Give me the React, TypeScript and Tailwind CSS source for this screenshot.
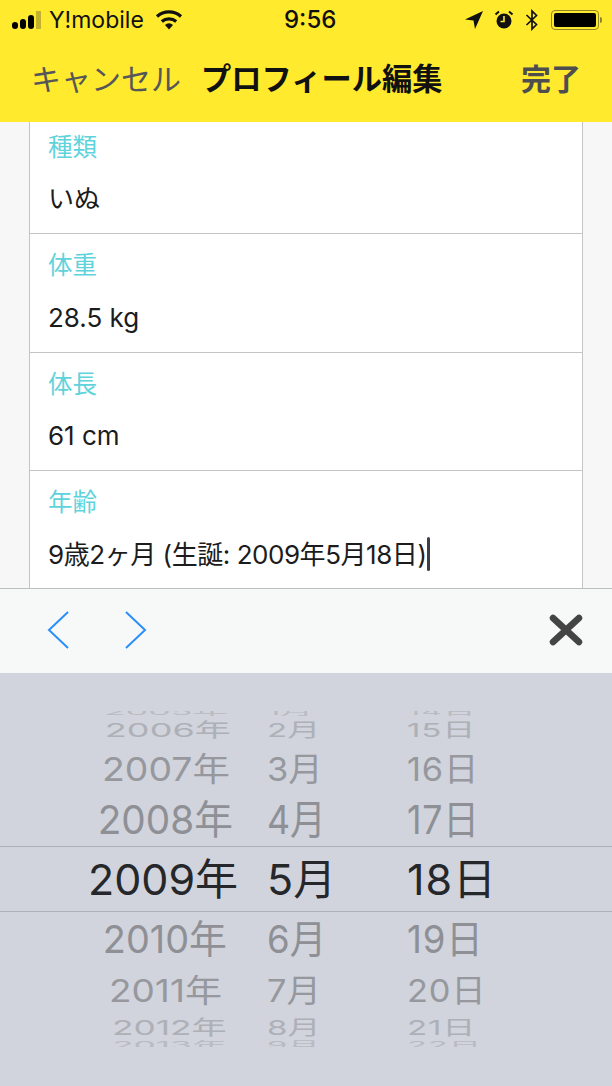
const sans = "font-['Inter','Noto_Sans_CJK_JP',sans-serif]";

function Field({ label, value, caret }: { label: string; value: string; caret?: boolean }) {
  return (
    <div className="h-[118.5px] shrink-0 border-b border-[#c4c4c4] pl-[18px] pt-[15px]">
      <div className="text-[24.5px] leading-[32px] text-[#5fd3dc]">{label}</div>
      <div className={`mt-[20px] flex h-[32px] items-center text-[26px] text-[#1c1c1c] ${caret ? "tracking-[-0.45px]" : ""}`}>
        {value}
        {caret && <span className="ml-px h-[34px] w-[3px] rounded-sm bg-[#3c4046]" />}
      </div>
    </div>
  );
}

type WheelRow = { year: string; month: string; day: string; row: string; text: string; yearX: string; restX: string };

const rows: WheelRow[] = [
  { year: "2005年", month: "1月", day: "14日", row: "h-[5px] items-end", text: "scale-y-[.2] text-[#b9bbc2]", yearX: "origin-[63%_100%] scale-x-[.83]", restX: "origin-bottom-left scale-x-[.76]" },
  { year: "2006年", month: "2月", day: "15日", row: "h-[29px] items-center", text: "scale-y-[.45] text-[#aeb0b7]", yearX: "origin-[70%_50%] scale-x-[.84]", restX: "origin-left scale-x-[.77]" },
  { year: "2007年", month: "3月", day: "16日", row: "h-[48px] items-center", text: "scale-y-[.76] text-[#96989e]", yearX: "origin-[63%_50%] scale-x-[.87]", restX: "origin-left scale-x-[.8]" },
  { year: "2008年", month: "4月", day: "17日", row: "h-[53px] items-center", text: "scale-y-[.93] text-[#8e9096]", yearX: "origin-[65%_50%] scale-x-[.9]", restX: "origin-left scale-x-[.83]" },
  { year: "2009年", month: "5月", day: "18日", row: "h-[66px] items-center border-y border-[#aeb0b8]", text: "text-[#26272a]", yearX: "", restX: "" },
  { year: "2010年", month: "6月", day: "19日", row: "h-[54px] items-center", text: "scale-y-[.9] text-[#8e9096]", yearX: "origin-[58%_50%] scale-x-[.88]", restX: "origin-left scale-x-[.85]" },
  { year: "2011年", month: "7月", day: "20日", row: "h-[48px] items-center", text: "scale-y-[.73] text-[#96989e]", yearX: "origin-[65%_50%] scale-x-[.86]", restX: "origin-left scale-x-[.8]" },
  { year: "2012年", month: "8月", day: "21日", row: "h-[26px] items-center", text: "scale-y-[.47] text-[#aeb0b7]", yearX: "origin-[75%_50%] scale-x-[.82]", restX: "origin-left scale-x-[.77]" },
  { year: "2013年", month: "9月", day: "22日", row: "h-[7px] items-start", text: "scale-y-[.25] text-[#b9bbc2]", yearX: "origin-[75%_0%] scale-x-[.82]", restX: "origin-top-left scale-x-[.76]" },
];

function StatusBar() {
  return (
    <div className="flex h-[40px] items-center pl-[12px] pr-[10px] text-[#111]">
      <div className="flex w-[272px] items-center">
        <div className="flex items-end gap-[2px]">
          <span className="h-[7px] w-[6px] rounded-full bg-black" />
          <span className="h-[10px] w-[6px] rounded-full bg-black" />
          <span className="h-[14px] w-[6px] rounded-sm bg-black" />
          <span className="h-[18px] w-[5px] bg-[#c2b12c]" />
        </div>
        <span className="ml-[8px] text-[23px] leading-none">Y!mobile</span>
        <svg className="ml-[11px]" width="28" height="20" viewBox="0 0 28 20">
          <path d="M14 19.5l-4-4.6a6 6 0 0 1 8 0z" fill="#111" />
          <path d="M6.8 11.500a11 11 0 0 1 14.400 0" stroke="#111" strokeWidth="3.2" fill="none" />
          <path d="M2 6.500a18 18 0 0 1 24 0" stroke="#111" strokeWidth="3.2" fill="none" />
        </svg>
      </div>
      <span className="text-[24px] font-medium leading-none">9:56</span>
      <div className="ml-auto flex items-center">
        <svg width="20" height="20" viewBox="0 0 20 20">
          <path d="M19 1L1 9.500l8.500 1 1.500 8.500z" fill="#111" />
        </svg>
        <svg className="ml-[10px]" width="20" height="20" viewBox="0 0 20 20">
          <circle cx="10" cy="11" r="7.500" fill="#111" />
          <path d="M10 6v5.500H6.500" stroke="#ffea2d" strokeWidth="1.6" fill="none" />
          <path d="M1.500 4.500L5 1.500M18.500 4.500L15 1.500" stroke="#111" strokeWidth="2" />
        </svg>
        <svg className="ml-[11px]" width="14" height="22" viewBox="0 0 14 22">
          <path d="M1.500 6l10 9.500L7 20V2l4.500 4.500-10 9.500" stroke="#111" strokeWidth="1.7" fill="none" />
        </svg>
        <div className="ml-[12px] flex h-[20px] w-[48px] items-center rounded-[4px] border border-[#8f8428] p-[2px]">
          <div className="h-full w-full rounded-[2px] bg-black" />
        </div>
        <span className="ml-px h-[6px] w-[2px] rounded-r-sm bg-[#8f8428]" />
      </div>
    </div>
  );
}

export default function App() {
  return (
    <div className={`flex h-[1086px] w-[612px] flex-col overflow-hidden bg-[#f7f7f7] ${sans}`}>
      <header className="z-10 h-[122px] shrink-0 bg-[#ffea2d]">
        <StatusBar />
        <div className="flex h-[80px] items-center pb-[2px] pl-[31px] pr-[31px]">
          <span className="w-[170px] text-[30px] leading-none text-[#56565a]">キャンセル</span>
          <h1 className="text-[30.250px] font-bold leading-none text-[#111]">プロフィール編集</h1>
          <span className="ml-auto text-[30px] font-semibold leading-none text-[#4e4e4e]">完了</span>
        </div>
      </header>

      <main className="h-[466px] shrink-0 overflow-hidden">
        <div className="-mt-[6.500px] mx-[29px] border-x border-[#c4c4c4] bg-white">
          <Field label="種類" value="いぬ" />
          <Field label="体重" value="28.5 kg" />
          <Field label="体長" value="61 cm" />
          <Field label="年齢" value="9歳2ヶ月 (生誕: 2009年5月18日)" caret />
        </div>
      </main>

      <div className="flex h-[85px] shrink-0 items-center border-t border-[#bdbdbd] bg-[#f7f8f8] pb-[3px] pl-[47px] pr-[29px]">
        <svg width="24" height="40" viewBox="0 0 24 40">
          <path d="M21 2L2 20l19 18" stroke="#2a8ffa" strokeWidth="2" fill="none" />
        </svg>
        <svg className="ml-[52px]" width="24" height="40" viewBox="0 0 24 40">
          <path d="M3 2l19 18L3 38" stroke="#2a8ffa" strokeWidth="2" fill="none" />
        </svg>
        <svg className="ml-auto" width="34" height="32" viewBox="0 0 34 32">
          <path d="M4 4l26 24M30 4L4 28" stroke="#444" strokeWidth="6.500" strokeLinecap="round" fill="none" />
        </svg>
      </div>

      <div className="flex-1 bg-[#d1d4dc] pt-[38px]">
        {rows.map((r) => (
          <div key={r.year} className={`grid grid-cols-[150px_168px_1fr] grid-rows-[100%] overflow-hidden pl-[88px] ${r.row}`}>
            <div className="flex justify-center">
              <span className={`inline-block whitespace-nowrap text-[43px] leading-none ${r.text} ${r.yearX}`}>{r.year}</span>
            </div>
            <div className="pl-[29px]">
              <span className={`inline-block whitespace-nowrap text-[43px] leading-none ${r.text} ${r.restX}`}>{r.month}</span>
            </div>
            <div className="pl-[1px]">
              <span className={`inline-block whitespace-nowrap text-[43px] tracking-[1px] leading-none ${r.text} ${r.restX}`}>{r.day}</span>
            </div>
          </div>
        ))}
      </div>
    </div>
  );
}
